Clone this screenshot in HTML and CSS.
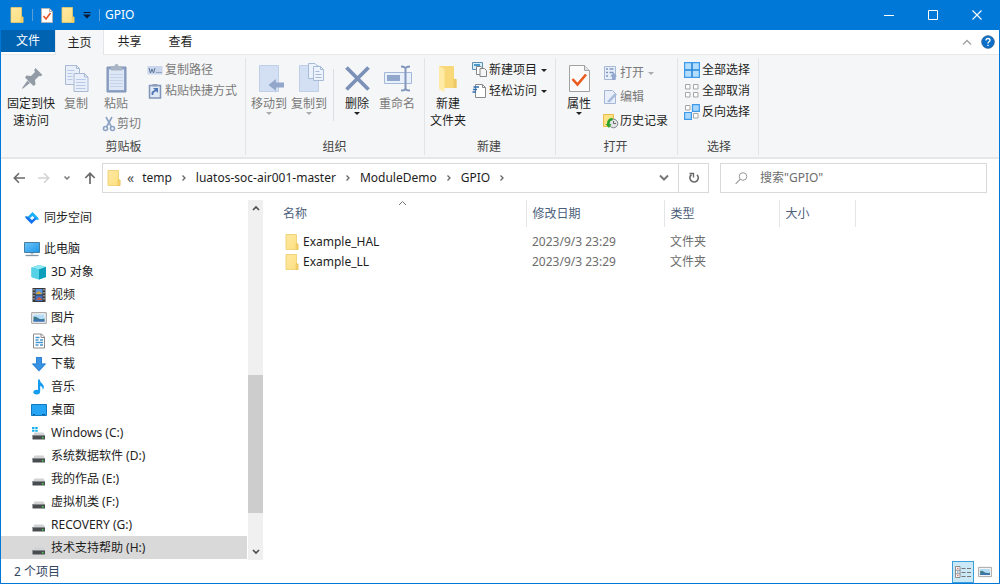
FILE: index.html
```html
<!DOCTYPE html>
<html lang="zh-CN">
<head>
<meta charset="utf-8">
<title>GPIO</title>
<meta name="viewport" content="width=device-width, initial-scale=1">
<link rel="stylesheet" href="styles.css">
</head>
<body>
<svg class="defs" aria-hidden="true">
  <defs>
    <linearGradient id="gold" x1="0" y1="0" x2="1" y2="1"><stop offset="0" stop-color="#ffe9a2"/><stop offset="1" stop-color="#fddf80"/></linearGradient>
    <linearGradient id="screen" x1="0" y1="0" x2="1" y2="1"><stop offset="0" stop-color="#6cc4f8"/><stop offset="1" stop-color="#1e96ea"/></linearGradient>
  </defs>
  <symbol id="folder" viewBox="0 0 14 16"><path d="M1 .5h10.500V10h1.500v5.500H1z" fill="url(#gold)" stroke="#eccb68" stroke-width=".8"/><path d="M11 10h2v5.500h-2z" fill="#f6d36e" stroke="#e6bf55" stroke-width=".5"/></symbol>
  <symbol id="drive" viewBox="0 0 16 16"><path d="M3.500 7.500h9l1.500 3H2z" fill="#d0d2d4"/><path d="M1.500 10h12.500v4.500H1.500z" fill="#4a4d50"/><path d="M1.500 10h12.500v1H1.500z" fill="#85898c"/><path d="M11 12h1.500v1.500H11z" fill="#42d34a"/></symbol>
  <symbol id="chevron" viewBox="0 0 8 8"><path d="M2.500 1.500L5 4 2.500 6.500" fill="none" stroke="#666" stroke-width="1.300"/></symbol>
  <symbol id="picture" viewBox="0 0 16 16"><path d="M.7 2.700h14.600v10.600H.7z" fill="#f6f6f6" stroke="#9b9b9b"/><path d="M2.500 4.500h11v7h-11z" fill="#b5dcf6"/><path d="M2.500 6.500q3 0 5 1.700t6 .3v3h-11z" fill="#3c7a86"/><path d="M2.500 10q5-1.500 11 .5v1h-11z" fill="#3f74b8"/></symbol>
</svg>
<div class="window">
  <header class="titlebar">
    <div class="quick">
      <svg class="ic-folder" aria-hidden="true"><use href="#folder"/></svg>
      <i class="quick-sep"></i>
      <button class="plain" aria-label="属性"><svg width="12" height="15" viewBox="0 0 12 15"><path d="M.5.5h8l3 3v11H.5z" fill="#fff" stroke="#b5b5b5"/><path d="M8.500.5v3h3" fill="none" stroke="#aaa"/><path d="M2.500 8l2.500 3 4.500-6" fill="none" stroke="#e8582c" stroke-width="1.700"/></svg></button>
      <button class="plain" aria-label="新建文件夹"><svg class="ic-folder"><use href="#folder"/></svg></button>
      <button class="plain" aria-label="自定义快速访问工具栏"><svg width="8" height="7" viewBox="0 0 8 7"><path d="M.5.500h7" stroke="#101830"/><path d="M0 2.500h8L4 6.500z" fill="#101830"/></svg></button>
      <i class="quick-sep"></i>
    </div>
    <h1 class="title">GPIO</h1>
    <div class="captions">
      <button class="caption" aria-label="最小化"><svg width="11" height="11"><path d="M0 5.500h10" stroke="#fff"/></svg></button>
      <button class="caption" aria-label="最大化"><svg width="11" height="11"><path d="M.5.5h9v9h-9z" fill="none" stroke="#fff"/></svg></button>
      <button class="caption" aria-label="关闭"><svg width="11" height="11"><path d="M.5.5l9 9M9.500.5l-9 9" stroke="#fff" stroke-width="1.100"/></svg></button>
    </div>
  </header>

  <nav class="tabs" aria-label="功能区">
    <button class="tab tab-file">文件</button>
    <button class="tab tab-active">主页</button>
    <button class="tab">共享</button>
    <button class="tab">查看</button>
    <div class="tab-tools">
      <button class="plain" aria-label="最小化功能区"><svg width="10" height="7"><path d="M1 5.500l4-4 4 4" fill="none" stroke="#a0a0a0" stroke-width="1.300"/></svg></button>
      <button class="plain" aria-label="帮助"><svg width="14" height="14" viewBox="0 0 14 14"><circle cx="7" cy="7" r="6.300" fill="#0a6fc8" stroke="#2c5f94" stroke-width=".8"/><path d="M5 5.500q0-2 2-2t2 1.700q0 1-1 1.600T7 8.500" fill="none" stroke="#fff" stroke-width="1.300"/><path d="M6.300 9.700h1.400v1.400H6.300z" fill="#fff"/></svg></button>
    </div>
  </nav>

  <section class="ribbon">
    <div class="group group-clip">
      <div class="tools">
        <button class="big wide"><svg width="32" height="32" viewBox="0 0 32 32"><g fill="#939ca6"><path d="M20.500 5L27.500 12l-2 1.300-1.500-.3-4 4 .5 4.500-2 1.500-8.500-8.500 1.500-2 4.500.5 4-4-.8-2z"/><path d="M12.500 17.500l2.500 2.500-7 5.500-1 .3.300-1z"/></g></svg>固定到快<br>速访问</button>
        <button class="big off" disabled><svg width="32" height="32" viewBox="0 0 32 32"><g fill="#e8effa" stroke="#a9b9d4"><path d="M5.500 2.500h11l3 3v16h-14z"/><path d="M14 10.500h10.500L28 14v14.500H14z"/><path d="M24.500 10.500V14H28M16.500 2.500v3h3" fill="none"/><path d="M7.500 7.500h7M7.500 10.500h5M7.500 13.500h5M7.500 16.500h5M16 16.500h9.500M16 19.500h9.500M16 22.500h9.500M16 25.500h9.500" stroke="#b7c9e6"/></g></svg>复制</button>
        <div class="stack">
          <button class="big off" disabled><svg width="32" height="32" viewBox="0 0 32 32"><path d="M7 4h19v25H7z" fill="#8ea3c6" stroke="#7e93b6"/><path d="M9 6.500h15V27H9z" fill="#dde7f6"/><path d="M11 3h3.500q0-2 2-2t2 2H22v4.500H11z" fill="#a9b4c4"/><path d="M10 11.500h13M10 14.500h13M10 17.500h13M10 20.500h13M10 23.500h13" stroke="#c5d4ea"/></svg>粘贴</button>
          <button class="small cut off" disabled><svg width="14" height="16" viewBox="0 0 14 16"><g fill="none" stroke="#8ba2c5" stroke-width="1.600"><path d="M4 1l5.500 10M10 1L4.500 11"/><circle cx="3.500" cy="12.500" r="2"/><circle cx="10.500" cy="12.500" r="2"/></g></svg>剪切</button>
        </div>
        <div class="list">
          <button class="small off" disabled><svg width="16" height="16" viewBox="0 0 16 16"><path d="M.5 4h15v8.500H.5z" fill="#c9d6ec"/><path d="M2 6l1.500 5L5 7l1.500 4L8 6M9.500 10.500h1M11.500 10.500h1M13.500 10.500h1" fill="none" stroke="#5c7398"/></svg>复制路径</button>
          <button class="small off" disabled><svg width="16" height="16" viewBox="0 0 16 16"><path d="M2.500 2.500h11v12.500h-11z" fill="#dfe8f5" stroke="#8195b8" stroke-width="1.500"/><path d="M5.500 1h5v2.500h-5z" fill="#8f9fb8"/><path d="M5.500 12V9.500L9 7" fill="none" stroke="#5076b4" stroke-width="1.800"/><path d="M6 5h5v5z" fill="#5076b4"/></svg>粘贴快捷方式</button>
        </div>
      </div>
      <h2 class="group-name">剪贴板</h2>
    </div>

    <div class="group group-org">
      <div class="tools">
        <button class="big off" disabled><svg width="32" height="32" viewBox="0 0 32 32"><path d="M6.500 2.500h19v26h-19z" fill="#d3e0f3" stroke="#c0cfe7"/><path d="M15.500 22l7.500-6v3.500h8v5h-8V28z" fill="#92a7ca"/></svg>移动到<i class="caret"></i></button>
        <button class="big off" disabled><svg width="32" height="32" viewBox="0 0 32 32"><path d="M6.500 2.500h19v26h-19z" fill="#d3e0f3" stroke="#c0cfe7"/><g fill="#edf3fc" stroke="#a9bad6"><path d="M15.500.500H22l3 3v12h-9.500z"/><path d="M20.500 3.500h7l3 3v11h-10z"/><path d="M27.500 3.500v3h3M22.500 8.500h4M22.500 11.500h6M22.500 14.500h6" fill="none"/></g></svg>复制到<i class="caret"></i></button>
        <i class="rule"></i>
        <button class="big"><svg width="32" height="32" viewBox="0 0 32 32"><path d="M5.500 4.500l22 22M27.500 4.500l-22 22" stroke="#7b91b8" stroke-width="3.800"/></svg>删除<i class="caret"></i></button>
        <button class="big off" disabled><svg width="32" height="32" viewBox="0 0 32 32"><path d="M3.500 9.500h27v11h-27z" fill="#e8f0fc" stroke="#a5b8d8"/><path d="M6 12h13v6H6z" fill="#91a7cb"/><path d="M20 3.500q4.500 0 4.500 2.500 0-2.500 4.500-2.500M24.500 6v19M20 27.500q4.500 0 4.500-2.500 0 2.500 4.500 2.500" fill="none" stroke="#8197bb" stroke-width="2"/></svg>重命名</button>
      </div>
      <h2 class="group-name">组织</h2>
    </div>

    <div class="group group-new">
      <div class="tools">
        <button class="big"><svg width="32" height="32" viewBox="0 0 32 32"><path d="M7 3h15v12l2.500 2v8H7z" fill="#f8d878"/><path d="M7 3l5.500 3v23L7 26z" fill="#ffeaa6"/><path d="M21.500 16h3v9h-3z" fill="#eec867"/></svg>新建<br>文件夹</button>
        <div class="list">
          <button class="small"><svg width="16" height="16" viewBox="0 0 16 16"><path d="M.5.500h10v7H.5z" fill="#d8efff" stroke="#5d8fae"/><path d="M2 2h6v2H2z" fill="#4b99c8"/><path d="M4.500 4.500H9l1.500 1.500v6.500h-6z" fill="#fff" stroke="#858585"/><path d="M8 6.500h4.500l2 2v6H8z" fill="#f6f6f6" stroke="#858585"/></svg>新建项目<i class="caret"></i></button>
          <button class="small"><svg width="16" height="16" viewBox="0 0 16 16"><path d="M3.500 1.500h7l3 3v10h-10z" fill="#fff" stroke="#8a8a8a"/><path d="M10.500 1.500v3h3" fill="none" stroke="#8a8a8a"/><path d="M1.500 4h5.500M1 6.500h4M.5 9h3.500" stroke="#2d6db3" stroke-width="1.400"/></svg>轻松访问<i class="caret"></i></button>
        </div>
      </div>
      <h2 class="group-name">新建</h2>
    </div>

    <div class="group group-open">
      <div class="tools">
        <button class="big"><svg width="32" height="32" viewBox="0 0 32 32"><path d="M6.500 2.500h15l5 5v21h-20z" fill="#fafafa" stroke="#a2a2a2"/><path d="M21.500 2.500v5h5" fill="#e2e2e2" stroke="#a2a2a2"/><path d="M9.500 16l5 5.500 8.500-10" fill="none" stroke="#ea5a1c" stroke-width="2.600"/></svg>属性<i class="caret"></i></button>
        <div class="list loose">
          <button class="small off" disabled><svg width="16" height="16" viewBox="0 0 16 16"><path d="M1.500 1.500h11v13h-11z" fill="#e8effa" stroke="#a6b7d5"/><path d="M3 4h2M3 7.500h2M3 11h2M6.500 4h4M6.500 7.500h4" stroke="#7f98c0" stroke-width="1.600"/><path d="M10.500 7.500l3.500 4h-2V15H9v-3.500H7z" fill="#93a8cc"/></svg>打开<i class="caret"></i></button>
          <button class="small off" disabled><svg width="16" height="16" viewBox="0 0 16 16"><path d="M1.500 1.500h8l3 3v10h-11z" fill="#e8effa" stroke="#a6b7d5"/><path d="M4 12.500L12 4l2 1.500-7.500 8z" fill="#a7bbdc"/></svg>编辑</button>
          <button class="small"><svg width="16" height="16" viewBox="0 0 16 16"><path d="M.5 1.500h10v12H.5z" fill="#ffe286" stroke="#e8bd45"/><circle cx="10.500" cy="10.500" r="4.300" fill="#dfe3e6" stroke="#7e8588"/><path d="M10.500 8v2.500H13" fill="none" stroke="#666"/><path d="M9.500 6Q4.500 6.500 5.300 12" fill="none" stroke="#29a52d" stroke-width="2.500"/><path d="M2.500 11H8.300L6 15z" fill="#29a52d"/></svg>历史记录</button>
        </div>
      </div>
      <h2 class="group-name">打开</h2>
    </div>

    <div class="group group-select">
      <div class="tools">
        <div class="list">
          <button class="small"><svg width="16" height="16" viewBox="0 0 16 16"><path d="M.6.600h14.800v14.800H.6z" fill="#b4deff" stroke="#3d9ae8" stroke-width="1.200"/><path d="M8 1v14M1 8h14" stroke="#2a86d6" stroke-width="1.600"/></svg>全部选择</button>
          <button class="small"><svg width="16" height="16" viewBox="0 0 16 16"><g fill="#fff" stroke="#a5a5a5"><path d="M1.500 1.500h4.500V6H1.500zM9.500 1.500H14V6H9.500zM1.500 9.500h4.500V14H1.500zM9.500 9.500H14V14H9.500z"/></g></svg>全部取消</button>
          <button class="small"><svg width="16" height="16" viewBox="0 0 16 16"><path d="M1.500 1.500h4.500V6H1.500zM9.500 9.500H14V14H9.500z" fill="#fff" stroke="#a5a5a5"/><path d="M8.500.6h6.800v6.800H8.500zM.6 8.500h6.800v6.800H.6z" fill="#a8d8ff" stroke="#3d9ae8" stroke-width="1.200"/></svg>反向选择</button>
        </div>
      </div>
      <h2 class="group-name">选择</h2>
    </div>
  </section>

  <div class="location">
    <div class="arrows">
      <button class="plain" aria-label="后退"><svg width="12" height="12" viewBox="0 0 12 12"><path d="M12 6H1.500M6 1.300L1.300 6 6 10.700" fill="none" stroke="#6a6a6a" stroke-width="1.600"/></svg></button>
      <button class="plain" aria-label="前进" disabled><svg width="12" height="12" viewBox="0 0 12 12"><path d="M0 6h10.500M6 1.300L10.700 6 6 10.700" fill="none" stroke="#d2d2d2" stroke-width="1.500"/></svg></button>
      <button class="plain" aria-label="最近位置"><svg width="8" height="8" viewBox="0 0 8 8"><path d="M1.500 2.500L4 5l2.500-2.500" fill="none" stroke="#777" stroke-width="1.500"/></svg></button>
      <button class="plain" aria-label="上移"><svg width="12" height="12" viewBox="0 0 12 12"><path d="M6 12V1.500M1.300 6L6 1.300 10.700 6" fill="none" stroke="#6a6a6a" stroke-width="1.700"/></svg></button>
    </div>
    <div class="address">
      <svg class="ic-folder" aria-hidden="true"><use href="#folder"/></svg>
      <span class="crumb-more">«</span>
      <a class="crumb" href="#">temp</a><svg class="sep"><use href="#chevron"/></svg>
      <a class="crumb" href="#">luatos-soc-air001-master</a><svg class="sep"><use href="#chevron"/></svg>
      <a class="crumb" href="#">ModuleDemo</a><svg class="sep"><use href="#chevron"/></svg>
      <a class="crumb" href="#">GPIO</a><svg class="sep"><use href="#chevron"/></svg>
      <button class="plain history" aria-label="以前的位置"><svg width="10" height="8"><path d="M1 1.500l4 4 4-4" fill="none" stroke="#777" stroke-width="2"/></svg></button>
      <button class="refresh" aria-label="刷新"><svg width="12" height="12" viewBox="0 0 12 12"><path d="M3.500 2.500a4.200 4.200 0 1 0 5.500.3" fill="none" stroke="#6a6a6a" stroke-width="1.600"/><path d="M1.500 1.500h4v4" fill="none" stroke="#6a6a6a" stroke-width="1.400"/></svg></button>
    </div>
    <label class="search">
      <svg width="13" height="13" viewBox="0 0 13 13"><circle cx="8" cy="4.500" r="3.800" fill="none" stroke="#999"/><path d="M5.300 7.200L.7 11.800" stroke="#999" stroke-width="1.200"/></svg>
      <input type="search" aria-label="搜索" placeholder='搜索"GPIO"'>
    </label>
  </div>

  <main class="main">
    <nav class="tree" aria-label="导航窗格">
      <a class="node root gap" href="#"><svg width="16" height="16" viewBox="0 0 16 16"><path d="M8.500 2L14 7.500q1 1 .5 2.500-2 0-3.500-1.500L8.500 6 5.500 8.500 3.500 7z" fill="#1ab0fa"/><path d="M7.500 14L2 8.500q-1-1-.5-2.500 2 0 3.500 1.500L8 10l3-2.500L12.500 9z" fill="#1473ee"/></svg>同步空间</a>
      <a class="node root" href="#"><svg width="16" height="16" viewBox="0 0 16 16"><path d="M.5 1.500h15v10H.5z" fill="url(#screen)" stroke="#477d9f"/><path d="M6.500 12h3v1.500h-3z" fill="#b8c4cc"/><path d="M1.500 14.500h13" stroke="#8296a4" stroke-width="1.300"/></svg>此电脑</a>
      <a class="node" href="#"><svg width="16" height="16" viewBox="0 0 16 16"><path d="M.5 3.500L8 1l7 2v10l-7 2.500L.5 13z" fill="#2abad5"/><path d="M.5 3.500L8 1l7 2-7 2.500z" fill="#8ee8f2"/><path d="M.5 3.500l7.500 2v10L.5 13z" fill="#55d2e5"/><path d="M8 5.500L15 3v10l-7 2.500z" fill="#0d9ebb"/></svg>3D 对象</a>
      <a class="node" href="#"><svg width="16" height="16" viewBox="0 0 16 16"><path d="M1.500 1h13v14h-13z" fill="#383838"/><path d="M4.500 2h7v5.500h-7z" fill="#5b94df"/><path d="M4.500 8.500h7V14h-7z" fill="#3f73c8"/><path d="M5 6l3-2 3 3H5z" fill="#d7a13a"/><path d="M5 13l3-3 3 2v1z" fill="#c85a40"/><path d="M3 2v12M13 2v12" stroke="#ddd" stroke-dasharray="1.500 1.500"/></svg>视频</a>
      <a class="node" href="#"><svg width="16" height="16"><use href="#picture"/></svg>图片</a>
      <a class="node" href="#"><svg width="16" height="16" viewBox="0 0 16 16"><path d="M2.500 1h8l3 3v11h-11z" fill="#fff" stroke="#8b8b8b"/><path d="M10 1v3.500h3.500" fill="none" stroke="#8b8b8b"/><path d="M4.500 4.500h4M4.500 7h3M9 7h3M4.500 9.500h7.500M4.500 12h3M9 12h3" stroke="#4797ce" stroke-width="1.300"/></svg>文档</a>
      <a class="node" href="#"><svg width="16" height="16" viewBox="0 0 16 16"><path d="M5 1h6v6.500h4.500L8 15.500.5 7.500H5z" fill="#3a92e2"/><path d="M5.500 1.500h5v6.500h3.500L8 14.500 2 8h3.500z" fill="none" stroke="#2379ca" stroke-width=".6"/></svg>下载</a>
      <a class="node" href="#"><svg width="16" height="16" viewBox="0 0 16 16"><path d="M7 .500h1.700q.3 2.500 2.500 4.300 3 2.700.6 6.200.2-3-2.600-4.200V12q0 3.500-3.400 3.500Q2 15.200 2.300 12.800 3.300 10.300 7 11z" fill="#159cf0"/></svg>音乐</a>
      <a class="node" href="#"><svg width="16" height="16" viewBox="0 0 16 16"><path d="M.5 2.500h15v11H.5z" fill="#27a5f5" stroke="#1079c0"/><path d="M2 12.500h12" stroke="#0a5c9c" stroke-dasharray="2 7 3 0"/></svg>桌面</a>
      <a class="node" href="#"><svg width="16" height="16" viewBox="0 0 16 16"><use href="#drive" width="16" height="16"/><path d="M1 2h2.500v2H1zM4.200 2h2.500v2H4.200zM1 4.700h2.500v2H1zM4.200 4.700h2.500v2H4.200z" fill="#17b1f0"/></svg>Windows (C:)</a>
      <a class="node" href="#"><svg width="16" height="16"><use href="#drive"/></svg>系统数据软件 (D:)</a>
      <a class="node" href="#"><svg width="16" height="16"><use href="#drive"/></svg>我的作品 (E:)</a>
      <a class="node" href="#"><svg width="16" height="16"><use href="#drive"/></svg>虚拟机类 (F:)</a>
      <a class="node" href="#"><svg width="16" height="16"><use href="#drive"/></svg>RECOVERY (G:)</a>
      <a class="node selected" href="#" aria-current="true"><svg width="16" height="16"><use href="#drive"/></svg>技术支持帮助 (H:)</a>
    </nav>
    <div class="scrollbar">
      <button class="plain arrow" aria-label="向上滚动"><svg width="8" height="6"><path d="M1 5l3-3 3 3" fill="none" stroke="#505050" stroke-width="1.700"/></svg></button>
      <div class="track"><div class="thumb"></div></div>
      <button class="plain arrow" aria-label="向下滚动"><svg width="8" height="6"><path d="M1 1l3 3 3-3" fill="none" stroke="#505050" stroke-width="1.700"/></svg></button>
    </div>
    <section class="files">
      <table class="table">
        <thead>
          <tr>
            <th class="col-name" aria-sort="ascending">名称<svg class="sort" width="9" height="6"><path d="M1 5l3.500-3.500L8 5" fill="none" stroke="#777"/></svg></th>
            <th class="col-date">修改日期</th><th class="col-type">类型</th><th class="col-size">大小</th>
          </tr>
        </thead>
        <tbody>
          <tr><td><a class="file" href="#"><svg class="ic-folder"><use href="#folder"/></svg>Example_HAL</a></td><td>2023/9/3 23:29</td><td>文件夹</td><td></td></tr>
          <tr><td><a class="file" href="#"><svg class="ic-folder"><use href="#folder"/></svg>Example_LL</a></td><td>2023/9/3 23:29</td><td>文件夹</td><td></td></tr>
        </tbody>
      </table>
    </section>
  </main>

  <footer class="status">
    <span class="count">2 个项目</span>
    <button class="view view-on" aria-label="详细信息" aria-pressed="true"><svg width="16" height="16" viewBox="0 0 16 16"><path d="M.5 2.500H5v11H.5zM.5 6.200H5M.5 9.800H5" fill="#fff" stroke="#8a8a8a"/><path d="M2 4.300h1.500M2 11.700h1.500" stroke="#c55"/><path d="M2 8h1.500" stroke="#37b"/><path d="M6.500 4.500h4M12 4.500h4M6.500 8.500h4M12 8.500h4M6.500 12.500h4M12 12.500h4" stroke="#777"/></svg></button>
    <button class="view" aria-label="大缩略图" aria-pressed="false"><svg width="14" height="14"><use href="#picture"/></svg></button>
  </footer>
</div>
</body>
</html>
```

FILE: styles.css
```css
* { box-sizing: border-box; }

body {
  margin: 0;
  font: 12px/16px "Noto Sans", "Noto Sans CJK SC", sans-serif;
  color: #1e1e1e;
  background: #fff;
}

button, input { font: inherit; color: inherit; }
button { margin: 0; border: 0; background: none; }
a { color: inherit; text-decoration: none; }
svg { display: block; flex: none; }
h1, h2 { margin: 0; font: inherit; }

.defs { position: absolute; width: 0; height: 0; }
.plain { display: flex; padding: 0; }
.ic-folder { width: 14px; height: 16px; }

.window {
  display: flex;
  flex-direction: column;
  min-height: 100vh;
  border: 1px solid #0078d7;
  border-top: 0;
}

/* Title bar */
.titlebar {
  display: flex;
  align-items: center;
  height: 30px;
  padding-left: 9px;
  background: #0078d7;
  color: #fff;
}
.quick { display: flex; align-items: center; gap: 8px; }
.quick-sep { width: 1px; height: 12px; background: #5b9fd8; }
.title { margin-left: 5px; }
.captions { display: flex; margin-left: auto; }
.caption {
  display: flex;
  align-items: center;
  justify-content: center;
  width: 44px;
  height: 30px;
  padding: 0;
}

/* Ribbon tabs */
.tabs { display: flex; height: 25px; border-bottom: 1px solid #e6e8ea; }
.tab { width: 51px; height: 24px; padding: 0; }
.tab-file { width: 54px; height: 22px; background: #0063b1; color: #fff; }
.tab-active {
  width: 49px;
  height: 25px;
  border: solid #e3e5e8;
  border-width: 0 1px;
  background: #f5f6f7;
}
.tab-tools { display: flex; align-items: center; gap: 9px; margin-left: auto; padding-right: 4px; }

/* Ribbon */
.ribbon {
  display: flex;
  height: 104px;
  padding: 3px 0 2px;
  border-bottom: 2px solid #e6e7e8;
  background: #f5f6f7;
}
.group { display: flex; flex-direction: column; border-right: 1px solid #e2e4e6; }
.group-clip { width: 245px; padding-left: 5px; }
.group-org { width: 179px; padding-left: 3px; }
.group-new { width: 131px; padding-left: 2px; }
.group-open { width: 122px; padding-left: 2px; }
.group-select { width: 81px; padding-left: 6px; }
.tools { display: flex; flex: 1; align-items: flex-start; padding-top: 1px; }
.group-name { padding-right: 4px; text-align: center; color: #444; }

.big {
  display: flex;
  flex-direction: column;
  align-items: center;
  width: 40px;
  padding: 4px 0 0;
  line-height: 17px;
  white-space: nowrap;
  text-align: center;
}
.big.wide { width: 50px; }
.off { color: #7a7a7a; }
.stack { display: flex; flex-direction: column; gap: 4px; width: 51px; }
.cut { padding-left: 6px; }
.list { display: flex; flex-direction: column; gap: 5px; padding-top: 3px; }
.loose { gap: 8px; padding-top: 6px; }
.small { display: flex; align-items: center; gap: 2px; padding: 0; white-space: nowrap; }
.small.cut { padding-left: 6px; gap: 1px; }
.rule { width: 1px; height: 52px; margin: 10px 3px 0 4px; background: #dcdfe2; }
.group-new .big, .group-open .big { width: 42px; }
.group-new .tools, .group-open .tools { gap: 3px; }
.group-new .small, .group-open .small { gap: 1px; }

.caret {
  border: 3px solid transparent;
  border-top-color: #222;
  border-bottom: 0;
}
.off .caret { border-top-color: #aaa; }
.small .caret { margin-left: 3px; }

/* Address row */
.location { display: flex; height: 41px; padding: 4px 12px 7px 12px; }
.arrows { display: flex; align-items: center; gap: 13px; width: 89px; }
.address {
  display: flex;
  flex: 1;
  align-items: center;
  padding-left: 4px;
  border: 1px solid #d9d9d9;
}
.crumb-more { margin: 0 8px 0 6px; font-size: 14px; color: #555; }
.sep { width: 8px; height: 8px; margin: 0 8px; }
.history { margin-left: auto; padding: 0 9px; }
.refresh {
  display: flex;
  align-items: center;
  justify-content: center;
  align-self: stretch;
  width: 30px;
  padding: 0;
  border-left: 1px solid #d9d9d9;
}
.search {
  display: flex;
  align-items: center;
  gap: 12px;
  width: 267px;
  margin-left: 11px;
  padding-left: 14px;
  border: 1px solid #d9d9d9;
}
.search input { flex: 1; min-width: 0; padding: 0; border: 0; outline: 0; background: none; }
.search input::placeholder { color: #6d6d6d; opacity: 1; }

/* Content */
.main { display: flex; flex: 1; }
.tree { width: 246px; padding-top: 6px; }
.node { display: flex; align-items: center; gap: 4px; height: 23px; padding-left: 30px; white-space: nowrap; }
.root { padding-left: 23px; }
.gap { margin-bottom: 8px; }
.selected { background: #d9d9d9; }

.scrollbar { display: flex; flex-direction: column; width: 15px; margin-left: 1px; background: #f0f0f0; }
.arrow { align-items: center; justify-content: center; height: 16px; }
.track { flex: 1; padding-top: 159px; }
.thumb { height: 138px; background: #cdcdcd; }

.files { flex: 1; padding-left: 7px; }
.table { width: 585px; border-collapse: collapse; table-layout: fixed; color: #6d6d6d; }
.table th {
  position: relative;
  height: 27px;
  padding: 0 6px;
  border-right: 1px solid #e5e5e5;
  font-weight: 400;
  text-align: left;
  color: #4c607a;
}
.table .col-name { width: 256px; padding-left: 13px; }
.col-date { width: 138px; }
.col-type { width: 115px; }
.col-size { width: 76px; }
.sort { position: absolute; top: 0; left: 50%; }
.table tbody::before { content: ""; display: block; height: 5px; }
.table td { height: 20px; padding: 0 6px; }
.table td:first-child { padding-left: 15px; }
.file { display: flex; align-items: center; gap: 4px; color: #1e1e1e; }

/* Status bar */
.status { display: flex; align-items: center; height: 23px; padding: 0 3px 0 13px; color: #32465f; }
.count { margin-right: auto; }
.view { display: flex; align-items: center; justify-content: center; width: 22px; height: 22px; padding: 0; border: 1px solid transparent; }
.view-on { border-color: #3a9fdb; background: #cbe8f6; }
```
